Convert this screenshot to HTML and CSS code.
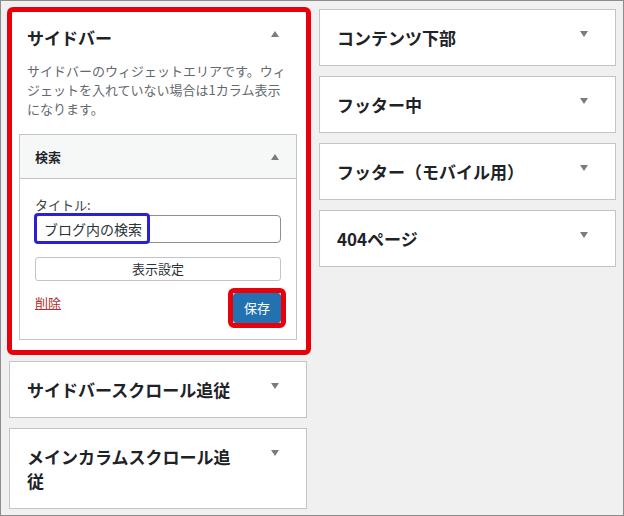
FILE: index.html
```html
<!DOCTYPE html>
<html lang="ja">
<head>
<meta charset="utf-8">
<link rel="stylesheet" href="styles.css">
</head>
<body>
<div class="frame">
  <div class="col">
    <section class="panel open">
      <div class="panel-head">
        <h2 class="panel-title">サイドバー</h2>
        <svg class="arrow" width="8" height="6" viewBox="0 0 8 6"><polygon points="0,6 8,6 4,0"/></svg>
      </div>
      <p class="desc">サイドバーのウィジェットエリアです。ウィジェットを入れていない場合は1カラム表示になります。</p>
      <div class="widget">
        <div class="widget-head">
          <h3 class="widget-title">検索</h3>
          <svg class="arrow" width="8" height="6" viewBox="0 0 8 6"><polygon points="0,6 8,6 4,0"/></svg>
        </div>
        <div class="widget-body">
          <label class="field-label">タイトル:</label>
          <div class="input-wrap">
            <div class="text-input">ブログ内の検索</div>
            <span class="mark-blue"></span>
          </div>
          <div class="opt-button">表示設定</div>
          <div class="actions">
            <a class="delete">削除</a>
            <div class="save-wrap">
              <div class="save">保存</div>
              <span class="mark-red-small"></span>
            </div>
          </div>
        </div>
      </div>
      <span class="mark-red"></span>
    </section>
    <section class="panel">
      <div class="panel-head">
        <h2 class="panel-title">サイドバースクロール追従</h2>
        <svg class="arrow" width="8" height="6" viewBox="0 0 8 6"><polygon points="0,0 8,0 4,6"/></svg>
      </div>
    </section>
    <section class="panel">
      <div class="panel-head">
        <h2 class="panel-title">メインカラムスクロール追従</h2>
        <svg class="arrow" width="8" height="6" viewBox="0 0 8 6"><polygon points="0,0 8,0 4,6"/></svg>
      </div>
    </section>
  </div>
  <div class="col right">
    <section class="panel">
      <div class="panel-head">
        <h2 class="panel-title">コンテンツ下部</h2>
        <svg class="arrow" width="8" height="6" viewBox="0 0 8 6"><polygon points="0,0 8,0 4,6"/></svg>
      </div>
    </section>
    <section class="panel">
      <div class="panel-head">
        <h2 class="panel-title">フッター中</h2>
        <svg class="arrow" width="8" height="6" viewBox="0 0 8 6"><polygon points="0,0 8,0 4,6"/></svg>
      </div>
    </section>
    <section class="panel">
      <div class="panel-head">
        <h2 class="panel-title">フッター（モバイル用）</h2>
        <svg class="arrow" width="8" height="6" viewBox="0 0 8 6"><polygon points="0,0 8,0 4,6"/></svg>
      </div>
    </section>
    <section class="panel">
      <div class="panel-head">
        <h2 class="panel-title">404ページ</h2>
        <svg class="arrow" width="8" height="6" viewBox="0 0 8 6"><polygon points="0,0 8,0 4,6"/></svg>
      </div>
    </section>
  </div>
</div>
</body>
</html>
```
FILE: styles.css
```css
* { box-sizing: border-box; }
html, body { margin: 0; padding: 0; }
body {
  width: 624px;
  height: 516px;
  font-family: "Noto Sans CJK JP", "Noto Sans", sans-serif;
  color: #1d2327;
  background: #f0f0f1;
}
.frame {
  width: 624px;
  height: 516px;
  border: 1px solid #8c8c8c;
  background: #f0f0f1;
  padding: 8px 0 0 8px;
  display: grid;
  grid-template-columns: 298px 297px;
  column-gap: 12px;
  align-items: start;
  overflow: hidden;
}
.col {
  display: flex;
  flex-direction: column;
  gap: 10px;
}
.panel {
  position: relative;
  background: #fff;
  border: 1px solid #c3c4c7;
}
.panel-head {
  display: flex;
  justify-content: space-between;
  align-items: flex-start;
  padding: 16px 27px 15px 17px;
}
.panel-title {
  margin: 0;
  width: 210px;
  font-size: 17px;
  line-height: 24px;
  font-weight: 700;
  color: #1d2327;
}
.arrow {
  flex: none;
  margin-top: 5px;
  fill: #787c82;
}
.open .panel-head { padding-bottom: 0; }
.desc {
  margin: 11px 0 0;
  padding: 0 17px;
  font-size: 13px;
  line-height: 19px;
  color: #646970;
}
.widget {
  margin: 16px 9px 10px;
  border: 1px solid #c3c4c7;
  background: #fff;
}
.widget-head {
  height: 44px;
  background: #f6f7f7;
  border-bottom: 1px solid #c3c4c7;
  display: flex;
  justify-content: space-between;
  align-items: center;
  padding: 0 17px 0 15px;
}
.widget-head .arrow { margin-top: 0; }
.widget-title {
  margin: 0;
  font-size: 13px;
  font-weight: 700;
  color: #1d2327;
}
.widget-body {
  padding: 17px 15px 16px;
  display: flex;
  flex-direction: column;
}
.field-label {
  font-size: 13px;
  line-height: 18px;
  color: #3c434a;
  margin-bottom: 1px;
}
.input-wrap { position: relative; }
.text-input {
  height: 28px;
  border: 1px solid #8c8f94;
  border-radius: 4px;
  padding: 0 8px;
  font-size: 14px;
  line-height: 26px;
  color: #2c3338;
}
.mark-blue {
  position: absolute;
  left: -1px;
  top: -2px;
  width: 116px;
  height: 31px;
  border: 3px solid #2a20d4;
  border-radius: 4px;
}
.opt-button {
  margin-top: 14px;
  height: 24px;
  border: 1px solid #c3c4c7;
  border-radius: 3px;
  font-size: 13px;
  line-height: 22px;
  text-align: center;
  color: #2c3338;
}
.actions {
  margin-top: 12px;
  display: flex;
  justify-content: space-between;
  align-items: flex-start;
}
.delete {
  font-size: 13px;
  line-height: 20px;
  color: #b32d2e;
  text-decoration: underline;
}
.save-wrap { position: relative; }
.save {
  height: 30px;
  padding: 0 10px;
  background: #2271b1;
  border: 1px solid #2271b1;
  border-radius: 3px;
  color: #fff;
  font-size: 13px;
  line-height: 28px;
}
.mark-red-small {
  position: absolute;
  top: -5px;
  left: -5px;
  right: -5px;
  bottom: -5px;
  border: 5px solid #e8000b;
  border-radius: 6px;
}
.mark-red {
  position: absolute;
  top: -3px;
  left: -3px;
  right: -5px;
  bottom: -5px;
  border: 5px solid #e8000b;
  border-radius: 6px;
  pointer-events: none;
}
```
